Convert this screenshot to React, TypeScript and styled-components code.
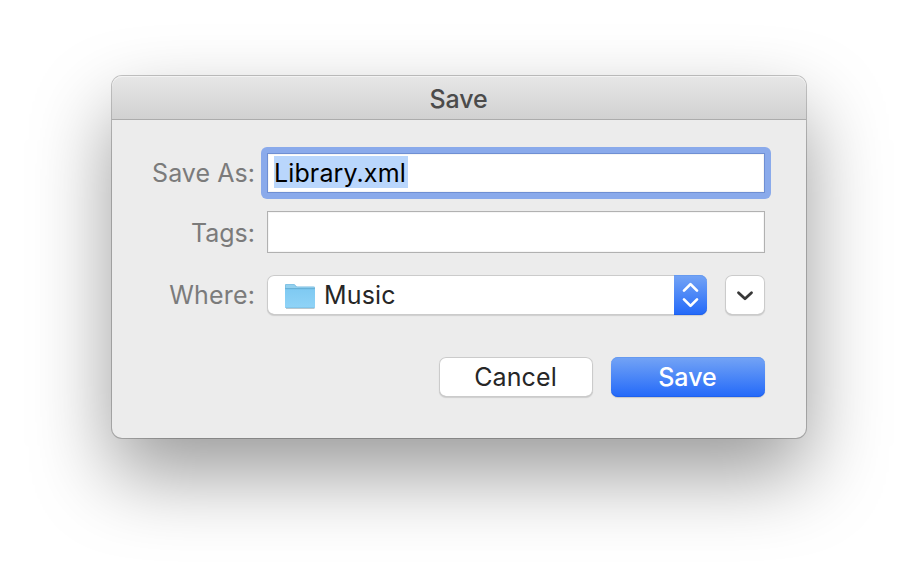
import React from "react";
import styled, { createGlobalStyle, css } from "styled-components";

const GlobalStyle = createGlobalStyle`
  *, *::before, *::after { box-sizing: border-box; }
  html, body { margin: 0; background: #fff; overflow: hidden; }
  body, button, input {
    font-family: Inter, "Liberation Sans", sans-serif;
    font-size: 25px;
  }
`;

const Desktop = styled.main`
  width: 918px;
  height: 586px;
  padding: 76px 112px 0;
  overflow: hidden;
  background: #fff;
`;

const Dialog = styled.section`
  width: 694px;
  height: 362px;
  border-radius: 10px;
  background: #ececec;
  box-shadow:
    0 0 0 1px rgba(0, 0, 0, 0.22),
    0 36px 80px rgba(0, 0, 0, 0.4);
`;

const TitleBar = styled.header`
  display: flex;
  align-items: center;
  justify-content: center;
  height: 44px;
  padding: 2px 1px 0 0;
  border-bottom: 1px solid #acacac;
  border-radius: 10px 10px 0 0;
  background: linear-gradient(#e7e7e7, #d1d1d1);
  box-shadow: inset 0 1px 0 #f3f3f3;
  color: #4b4b4b;
`;

const Text = styled.span<{ $track?: number; $weight?: number }>`
  line-height: 30px;
  white-space: nowrap;
  letter-spacing: ${({ $track = 0 }) => $track}px;
  font-weight: ${({ $weight = 400 }) => $weight};
`;

const Form = styled.div`
  display: grid;
  grid-template-columns: 143px 498px;
  grid-template-rows: 40px 42px 44px;
  column-gap: 12px;
  padding-top: 33px;
  row-gap: 18px;

  & > :nth-child(n + 5) { margin-top: 4px; }
`;

const Label = styled.label<{ $drop?: number }>`
  display: flex;
  align-items: center;
  justify-content: flex-end;
  padding-top: ${({ $drop = 0 }) => $drop}px;
  color: #7b7b7b;
`;

const Field = styled.div<{ $focused?: boolean }>`
  display: flex;
  align-items: center;
  width: 498px;
  height: 100%;
  padding: 0 0 0 6px;
  border: 1px solid ${({ $focused }) => ($focused ? "#6f8fd3" : "#b1b1b1")};
  background: #fff;
  color: #000;
  box-shadow: inset 0 0 0 1px #f6f6f6;
`;

const FocusRing = styled.div`
  margin: -6px;
  padding: 6px;
  border-radius: 6px;
  background: #8aaaeb;
`;

const Selection = styled.span`
  display: flex;
  align-items: center;
  width: 134px;
  height: 32px;
  padding-top: 1px;
  margin-top: -2px;
  background: #b9d6fc;
`;

const controlSurface = css`
  border: 0;
  border-radius: 7px;
  background: #fff;
  color: #262626;
  box-shadow: inset 0 0 0 1px #cbcbcb, inset 0 -1px 0 #b5b5b5, 0 1px 1px rgba(0, 0, 0, 0.13);
`;

const blueSurface = css`
  background: linear-gradient(#74a4f5, #2369f9);
  color: #fff;
`;

const WhereRow = styled.div`
  display: flex;
  gap: 18px;
  height: 40px;
`;

const Popup = styled.button`
  ${controlSurface}
  display: flex;
  align-items: center;
  width: 440px;
  height: 40px;
  padding: 0 0 0 17px;
`;

const PopupName = styled.span`
  display: flex;
  flex: 1;
  padding-left: 8px;
`;

const Stepper = styled.span`
  ${blueSurface}
  display: grid;
  place-items: center;
  width: 33px;
  height: 40px;
  border-radius: 0 7px 7px 0;
  box-shadow: inset 0 1px 0 #669af0, inset 0 -1px 0 #1e60ed;
`;

const Disclosure = styled.button`
  ${controlSurface}
  display: grid;
  place-items: center;
  width: 40px;
  height: 40px;
  padding: 1px 0 0;
`;

const Actions = styled.footer`
  display: flex;
  justify-content: flex-end;
  gap: 18px;
  padding: 42px 41px 0 0;
`;

const PushButton = styled.button<{ $primary?: boolean }>`
  ${controlSurface}
  display: flex;
  align-items: center;
  justify-content: center;
  width: 154px;
  height: 40px;
  padding: 0 1px 0 0;
  ${({ $primary }) => $primary && css`
    ${blueSurface}
    box-shadow: inset 0 1px 0 #669af0, inset 0 -1px 0 #1e60ed, 0 1px 1px rgba(0, 0, 0, 0.16);
  `}
`;

const FolderSvg = styled.svg`
  flex: none;
  margin-top: 3px;
`;

const FolderIcon = () => (
  <FolderSvg width="32" height="28" viewBox="0 0 32 28" aria-hidden="true">
    <defs>
      <linearGradient id="folder-front" x2="0" y2="1">
        <stop stopColor="#7fcaf2" />
        <stop offset="1" stopColor="#8fd3f7" />
      </linearGradient>
    </defs>
    <path d="M2 25.5H30.5" stroke="#b9c7ce" />
    <path d="M1 24V2.2Q1 1 2.2 1H9.5Q10.6 1 11.3 2L12.2 3Q12.8 3.6 14 3.6H29.5Q31 3.6 31 5V24Q31 25 30 25H2Q1 25 1 24Z" fill="#74b9df" />
    <path d="M1.6 5V2.3Q1.6 1.6 2.5 1.6H9.5Q10.2 1.6 10.7 2.3L11.7 3.5Q12.4 4.3 14 4.3H29.4Q30.4 4.3 30.4 5.2Z" fill="#93d0ee" />
    <path d="M1 6H31V23.7Q31 24.5 30 24.5H2Q1 24.5 1 23.7Z" fill="url(#folder-front)" />
    <path d="M1.2 5.7H30.8" stroke="#65afd6" />
  </FolderSvg>
);

const StepperIcon = () => (
  <svg width="17" height="26" viewBox="0 0 17 26" fill="none" stroke="#fff" strokeWidth="2.7" strokeLinecap="round" strokeLinejoin="round" aria-hidden="true">
    <path d="M2 8.6 8.5 2.1 15 8.6M2 17.4l6.5 6.5 6.5-6.5" />
  </svg>
);

const ChevronIcon = () => (
  <svg width="18" height="12" viewBox="0 0 18 12" fill="none" stroke="#383838" strokeWidth="2.8" strokeLinecap="round" strokeLinejoin="round" aria-hidden="true">
    <path d="m2.5 2.8 6.5 6 6.5-6" />
  </svg>
);

export default function App() {
  return (
    <>
      <GlobalStyle />
      <Desktop>
        <Dialog>
          <TitleBar><Text $weight={500} $track={-0.1}>Save</Text></TitleBar>
          <Form>
            <Label><Text $track={0.05}>Save As:</Text></Label>
            <FocusRing>
              <Field $focused>
                <Selection><Text $track={0.12}>Library.xml</Text></Selection>
              </Field>
            </FocusRing>
            <Label $drop={2}><Text>Tags:</Text></Label>
            <Field />
            <Label><Text $track={0.15}>Where:</Text></Label>
            <WhereRow>
              <Popup>
                <FolderIcon />
                <PopupName><Text $track={0.15}>Music</Text></PopupName>
                <Stepper><StepperIcon /></Stepper>
              </Popup>
              <Disclosure aria-label="Expand"><ChevronIcon /></Disclosure>
            </WhereRow>
          </Form>
          <Actions>
            <PushButton><Text $track={0.1}>Cancel</Text></PushButton>
            <PushButton $primary><Text $weight={500}>Save</Text></PushButton>
          </Actions>
        </Dialog>
      </Desktop>
    </>
  );
}
